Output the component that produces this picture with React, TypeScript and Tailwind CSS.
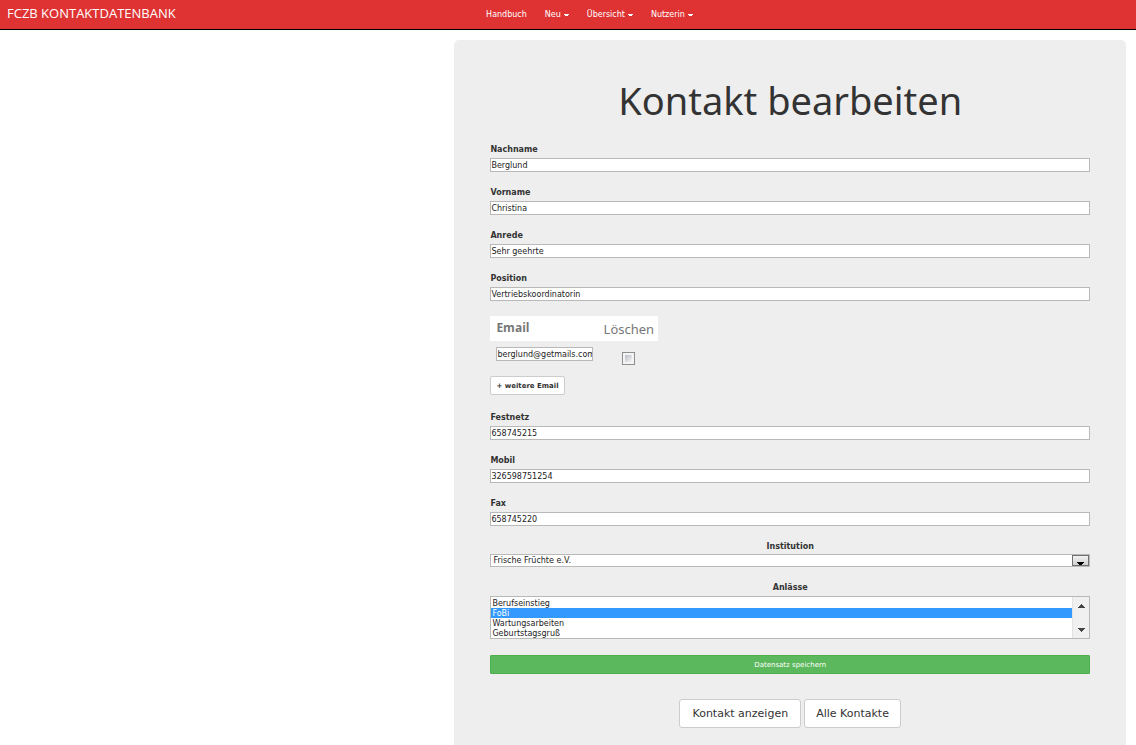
import type { ReactNode } from "react";

function Caret() {
  return (
    <svg viewBox="0 0 5 3" className="mt-px h-[3px] w-[5px]" fill="currentColor" aria-hidden="true">
      <path d="M0 0h5v1H4v1H1V1H0z" />
    </svg>
  );
}

function NavMenu({ children }: { children: ReactNode }) {
  return (
    <button type="button" className="flex items-center gap-[3px] text-white">
      {children}
      <Caret />
    </button>
  );
}

const labelClass = "block text-[8px] leading-3 font-bold";
const inputClass =
  "block h-[14px] w-full border border-[#b9b9b9] bg-white text-[8px] leading-3 text-[#222]";

function Field({ id, label, value }: { id: string; label: string; value: string }) {
  return (
    <div className="mb-[15px]">
      <label htmlFor={id} className={labelClass}>
        {label}
      </label>
      <input id={id} type="text" defaultValue={value} className={`mt-[2px] ${inputClass}`} />
    </div>
  );
}

const occasions = ["Berufseinstieg", "FoBi", "Wartungsarbeiten", "Geburtstagsgruß"];

export default function App() {
  return (
    <div className="flex min-h-screen flex-col bg-white font-['DejaVu_Sans',Verdana,sans-serif] text-[#333]">
      <header className="flex h-[30px] items-center border-b border-black bg-[#df3333] text-white">
        <div className="w-[42%] pb-1 pl-[7px]">
          <a href="#" className="block font-['Open_Sans',sans-serif] text-[13px] leading-5">
            FCZB KONTAKTDATENBANK
          </a>
        </div>
        <nav className="flex gap-[18px] pl-[9px] text-[8px] leading-3">
          <a href="#">Handbuch</a>
          <NavMenu>Neu</NavMenu>
          <NavMenu>Übersicht</NavMenu>
          <NavMenu>Nutzerin</NavMenu>
        </nav>
      </header>

      <main className="mt-[10px] mr-[10px] ml-[40%] flex-1 rounded-t-[5px] bg-[#eee] px-9 pt-9 pb-4">
        <h1 className="mb-5 text-center font-['Noto_Sans',sans-serif] text-[38px] leading-12">
          Kontakt bearbeiten
        </h1>
        <form onSubmit={(e) => e.preventDefault()}>
          <Field id="nachname" label="Nachname" value="Berglund" />
          <Field id="vorname" label="Vorname" value="Christina" />
          <Field id="anrede" label="Anrede" value="Sehr geehrte" />
          <Field id="position" label="Position" value="Vertriebskoordinatorin" />

          <table className="w-[168px] table-fixed border-collapse">
            <thead>
              <tr className="h-[25px] bg-white font-['Noto_Sans',sans-serif] text-[13px] leading-5 text-[#777]">
                <th scope="col" className="w-[109px] pb-[2px] pl-[6px] text-left font-['Open_Sans',sans-serif] text-[12px] font-bold">
                  Email
                </th>
                <th scope="col" className="text-center font-normal">
                  Löschen
                </th>
              </tr>
            </thead>
            <tbody>
              <tr>
                <td className="pt-[6px] pr-[6px] pl-[6px] align-top">
                  <input
                    type="text"
                    aria-label="Email"
                    defaultValue="berglund@getmails.com"
                    className={inputClass}
                  />
                </td>
                <td className="pt-[11px] align-top">
                  <input
                    type="checkbox"
                    aria-label="Löschen"
                    className="ml-[23px] block size-[13px] appearance-none border border-[#8e8f8f] bg-[#f4f4f4] bg-linear-to-br from-[#b9bec8] to-[#f6f6f6] bg-clip-content bg-origin-content p-[2px] ring-2 ring-[#f4f4f4] ring-inset"
                  />
                </td>
              </tr>
            </tbody>
          </table>
          <button
            type="button"
            className="mt-[11px] mb-[17px] block h-[19px] rounded-[2px] border border-[#ccc] bg-white px-[5px] text-[7px] leading-3 font-bold"
          >
            + weitere Email
          </button>

          <Field id="festnetz" label="Festnetz" value="658745215" />
          <Field id="mobil" label="Mobil" value="326598751254" />
          <Field id="fax" label="Fax" value="658745220" />

          <div className="mb-[15px]">
            <label htmlFor="institution" className={`${labelClass} text-center`}>
              Institution
            </label>
            <div className="mt-px flex h-[13px] border border-[#b9b9b9] bg-white">
              <select
                id="institution"
                className="min-w-0 flex-1 appearance-none pl-[2px] text-[8px] leading-[11px] text-[#222]"
              >
                <option>Frische Früchte e.V.</option>
              </select>
              <span
                aria-hidden="true"
                className="flex w-[17px] items-end justify-center border border-[#707070] bg-linear-to-b from-[#f2f2f2] to-[#cfcfcf] text-black"
              >
                <svg viewBox="0 0 7 3" className="h-[3px] w-[7px]" fill="currentColor">
                  <path d="M0 0h7v1H6v1H5v1H2V2H1V1H0z" />
                </svg>
              </span>
            </div>
          </div>

          <div className="mb-4">
            <label htmlFor="anlaesse" className={`${labelClass} text-center`}>
              Anlässe
            </label>
            <div className="mt-[2px] flex h-[43px] border border-[#b9b9b9] bg-white">
              <select
                id="anlaesse"
                multiple
                size={4}
                defaultValue={["FoBi"]}
                className="min-w-0 flex-1 appearance-none overflow-hidden py-px text-[8px] leading-[10px] text-[#222]"
              >
                {occasions.map((name) => (
                  <option
                    key={name}
                    className="h-[10px] min-h-0 overflow-visible p-0 pt-px pl-px leading-[10px] checked:bg-[#3399ff] checked:bg-linear-to-r checked:from-[#3399ff] checked:to-[#3399ff] checked:text-white checked:[-webkit-text-fill-color:#ffffff]"
                  >
                    {name}
                  </option>
                ))}
              </select>
              <span
                aria-hidden="true"
                className="flex w-[17px] flex-col items-center justify-between border-l border-[#e3e3e3] bg-[#f0f0f0] pt-[7px] pb-[6px] text-[#444]"
              >
                <svg viewBox="0 0 7 4" className="h-1 w-[7px]" fill="currentColor">
                  <path d="M3 0h1v1h1v1h1v1h1v1H0V3h1V2h1V1h1z" />
                </svg>
                <svg viewBox="0 0 7 4" className="h-1 w-[7px]" fill="currentColor">
                  <path d="M0 0h7v1H6v1H5v1H4v1H3V3H2V2H1V1H0z" />
                </svg>
              </span>
            </div>
          </div>

          <button
            type="submit"
            className="block h-[19px] w-full rounded-[1px] border border-[#4cae4c] bg-[#5cb85c] text-[7px] leading-3 text-white"
          >
            Datensatz speichern
          </button>
        </form>

        <div className="mt-[25px] flex justify-center gap-[3px] text-[11px] leading-4">
          <a href="#" className="flex h-[29px] items-center rounded-[3px] border border-[#ccc] bg-white px-3">
            Kontakt anzeigen
          </a>
          <a href="#" className="flex h-[29px] items-center rounded-[3px] border border-[#ccc] bg-white px-[11px]">
            Alle Kontakte
          </a>
        </div>
      </main>
    </div>
  );
}
